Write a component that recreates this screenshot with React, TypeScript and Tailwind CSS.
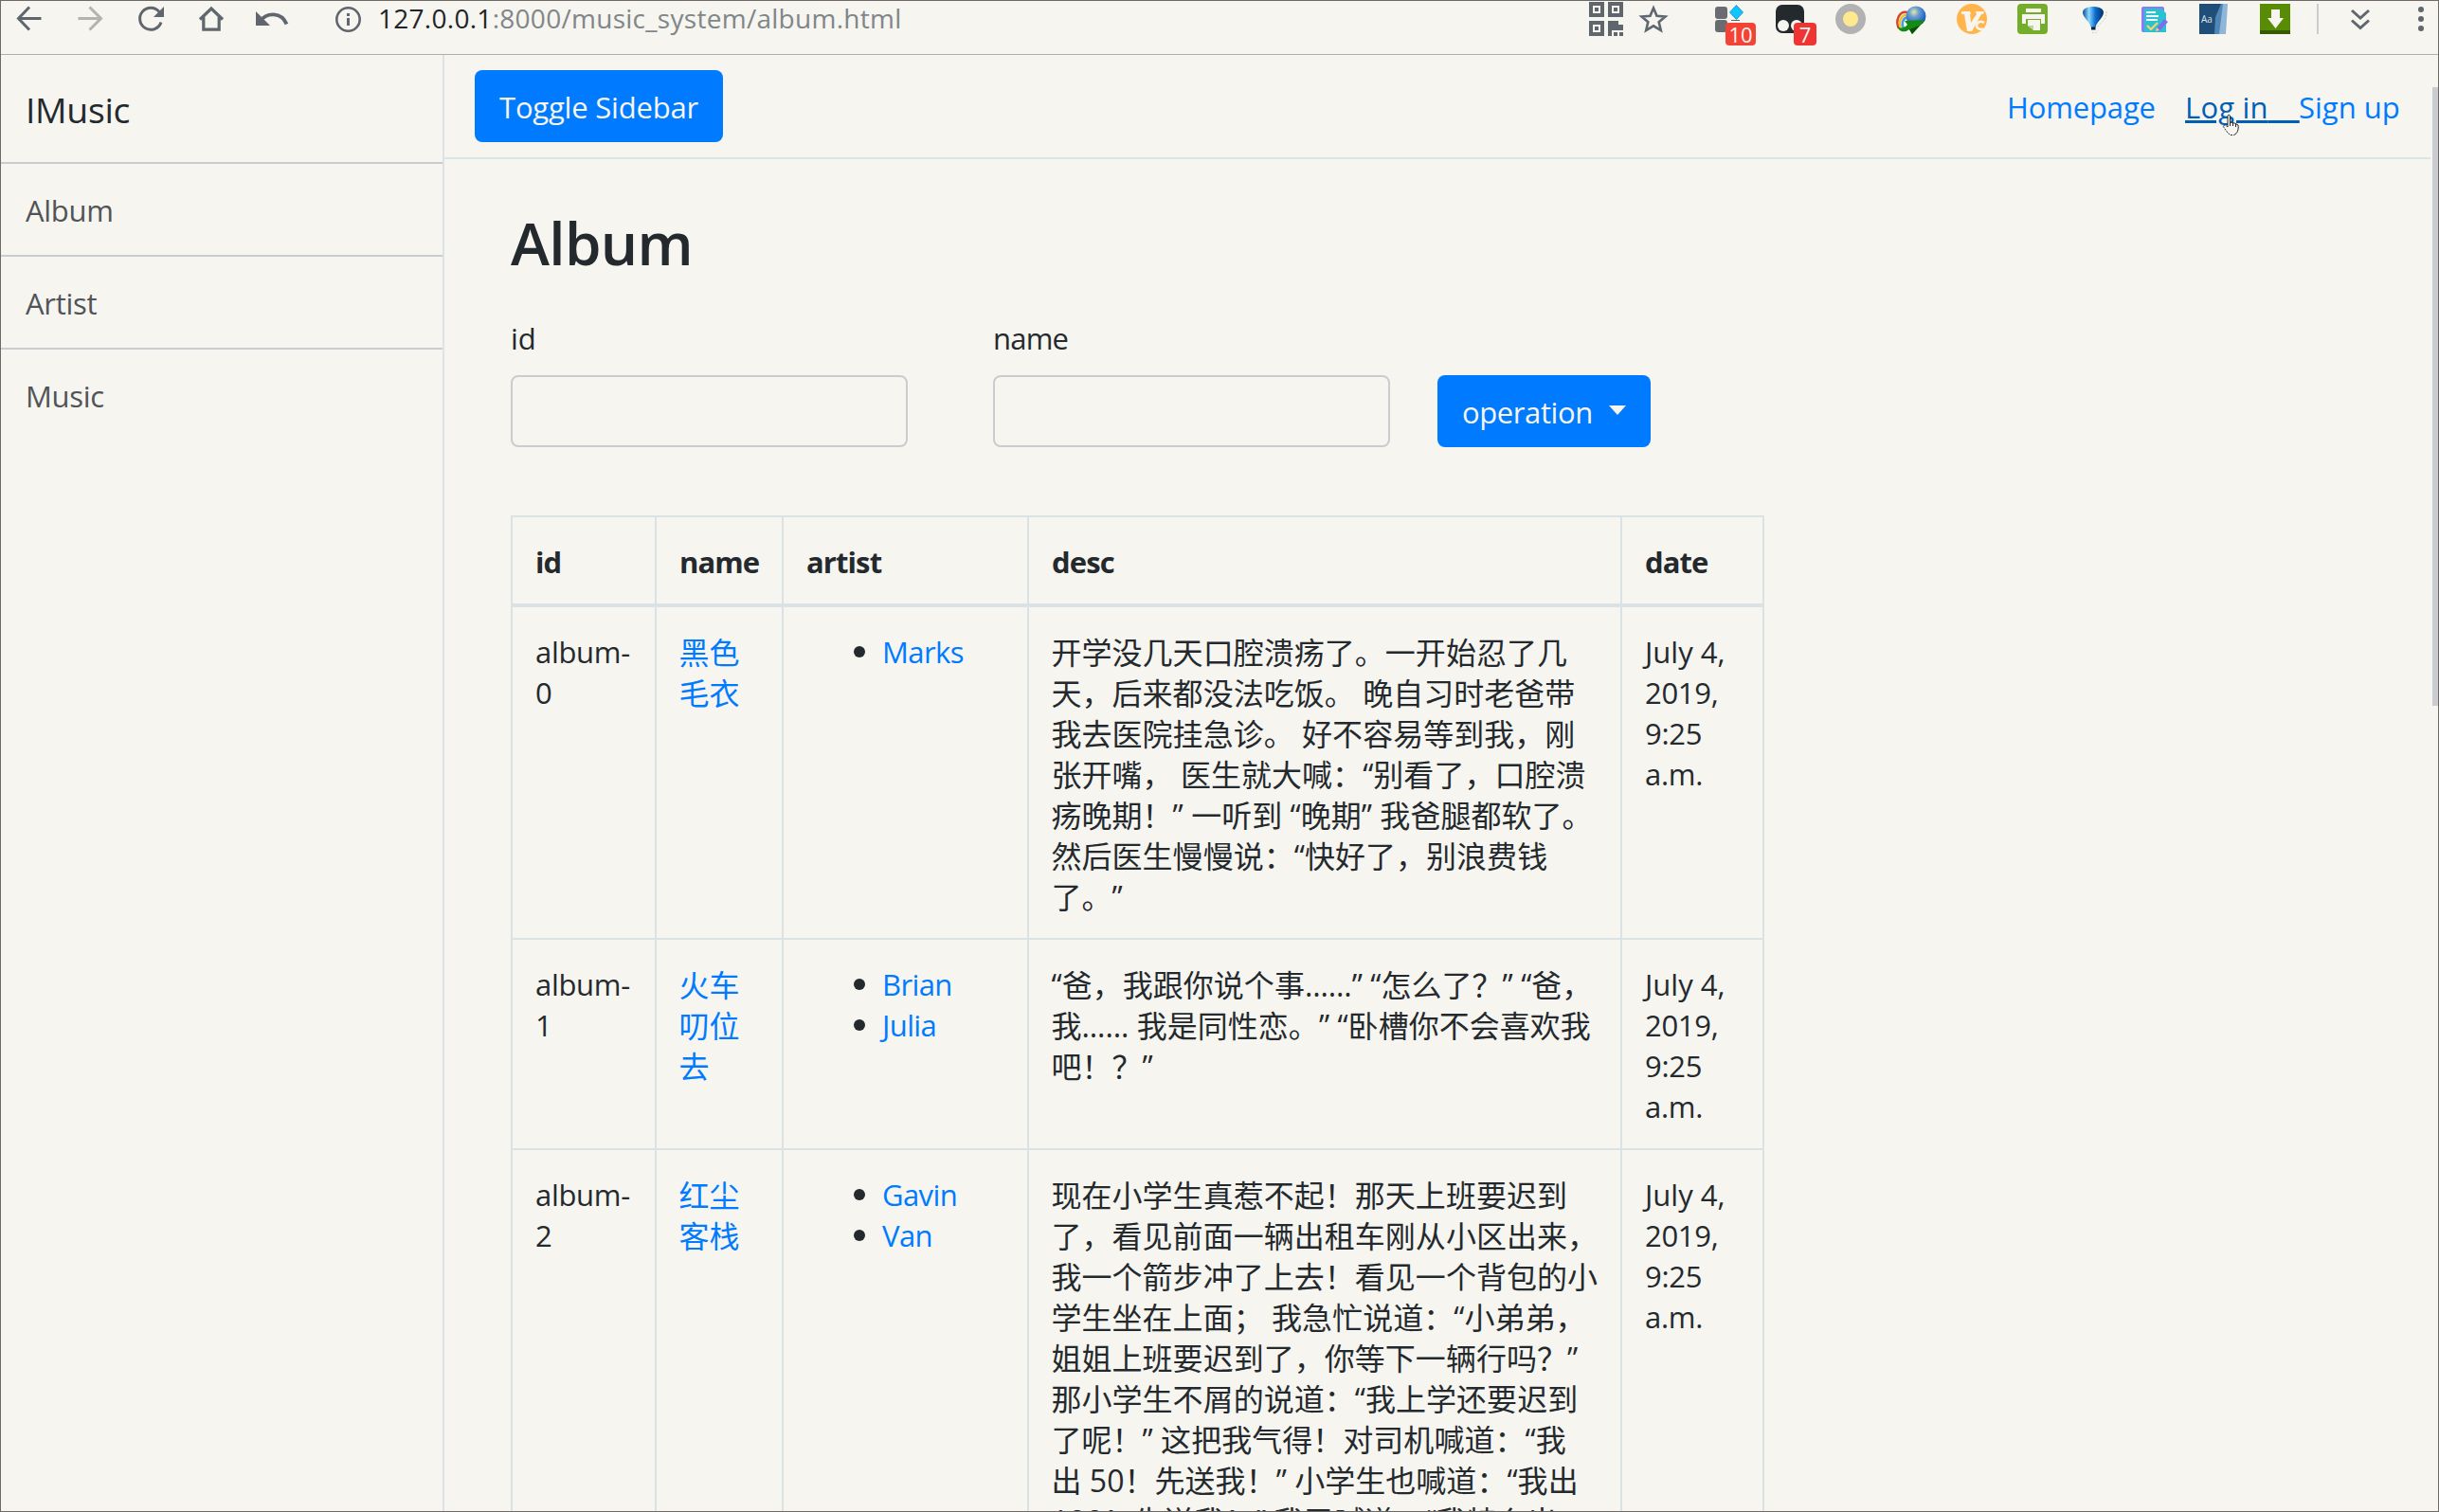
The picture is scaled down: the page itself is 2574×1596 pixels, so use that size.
import React from "react";

const GREY = "#5f666d";

/* One toolbar slot. Drawings share the toolbar's own coordinate space. */
function Slot({ x, w, children, badge }: { x: number; w: number; children: React.ReactNode; badge?: React.ReactNode }) {
  return (
    <div className="relative h-14 shrink-0" style={{ width: w }}>
      <svg width={w} height={56} viewBox={`${x} 1 ${w} 56`} fill="none" className="block">
        {children}
      </svg>
      {badge}
    </div>
  );
}

function Toolbar() {
  return (
    <header className="flex h-[57px] shrink-0 border-b border-[#b0afab]">
      <Slot x={1} w={62}>
        <path d="M31 7.500 19.500 19.500l11.500 12M19.500 19.500h24" stroke={GREY} strokeWidth="3" />
      </Slot>
      <Slot x={63} w={64}>
        <path d="M94.500 7.500 106.500 19.500l-12 12M106.500 19.500h-24" stroke="#b3b3b2" strokeWidth="3" />
      </Slot>
      <Slot x={127} w={64}>
        <path d="M168 12.500A11.500 11.500 0 1 0 170 23.500" stroke={GREY} strokeWidth="3" />
        <path d="M173 7v11h-11z" fill={GREY} />
      </Slot>
      <Slot x={191} w={64}>
        <path d="M211 20.500 223 9l12 11.500M214.800 18v13.200h16.400V18" stroke={GREY} strokeWidth="3.200" />
      </Slot>
      <Slot x={255} w={64}>
        <path d="M270 12v15h15z" fill={GREY} />
        <path d="M275 22c6-9 22-10 27.500 3.500" stroke={GREY} strokeWidth="3.800" />
      </Slot>
      <Slot x={319} w={80}>
        <circle cx="367.500" cy="20.500" r="12.200" stroke={GREY} strokeWidth="2.600" />
        <path d="M366 19h3v8h-3zM366 14h3v3h-3z" fill={GREY} />
      </Slot>
      <div className="h-9 text-[28px] leading-9 tracking-[0.28px] text-[#808689]">
        <span className="text-[#212529]">127.0.0.1</span>:8000/music_system/album.html
      </div>
      <div className="flex-1" />
      <Slot x={1665} w={56}>
        <path
          d="M1679 4h12v12h-12zM1699 4h12v12h-12zM1679 24h12v12h-12z"
          stroke={GREY}
          strokeWidth="4"
        />
        <path
          d="M1683 8h4v4h-4zM1703 8h4v4h-4zM1683 28h4v4h-4zM1697 22h11v4h5v6h-12v6h-4zM1703 34h4v4h-4zM1709 34h4v4h-4z"
          fill={GREY}
        />
      </Slot>
      <Slot x={1721} w={72}>
        <path
          d="M1745 8.500l3.500 8.200 9 .8-6.800 5.800 2.100 8.700-7.800-4.700-7.800 4.700 2.100-8.700-6.800-5.800 9-.8z"
          stroke={GREY}
          strokeWidth="2.600"
        />
      </Slot>
      <Slot
        x={1793}
        w={64}
        badge={
          <span className="absolute left-7 top-[23px] h-6 w-8 rounded bg-[#f44336] text-center text-[22px] leading-[25px] text-[#f6f5ef]">
            10
          </span>
        }
      >
        <rect x="1810" y="7" width="13" height="13" rx="3" fill="#696c70" />
        <rect x="1810" y="21" width="13" height="13" rx="3" fill="#696c70" />
        <path d="M1832.500 5.500l7 7.500-7 7.500-7-7.500z" fill="#0fc4ff" stroke="#1c9fd0" strokeLinejoin="round" />
        <path d="M1827 21.500h9" stroke={GREY} />
      </Slot>
      <Slot
        x={1857}
        w={64}
        badge={
          <span className="absolute left-9 top-[23px] h-6 w-6 rounded bg-[#ef3434] text-center text-[22px] leading-[25px] text-[#f6f5ef]">
            7
          </span>
        }
      >
        <rect x="1874" y="5" width="30" height="30" rx="7" fill="#24292e" />
        <circle cx="1882" cy="27" r="6" fill="#f6f5ef" />
        <circle cx="1896" cy="27" r="6" fill="#f6f5ef" />
      </Slot>
      <Slot x={1921} w={64}>
        <circle cx="1953" cy="20" r="16" fill="#b2b2b2" />
        <circle cx="1953" cy="20" r="8" fill="#ffe98f" />
      </Slot>
      <Slot x={1985} w={64}>
        <defs>
          <radialGradient id="globe" cx="0.400" cy="0.300" r="0.700">
            <stop offset="0" stopColor="#e4e9a8" />
            <stop offset="0.350" stopColor="#6f9fd0" />
            <stop offset="1" stopColor="#0b50c8" />
          </radialGradient>
        </defs>
        <path d="M2013 13c-9-2-13 9-9 17" stroke="#d9442c" strokeWidth="2.500" />
        <path d="M2014 16c-7-2-11 7-8 14" stroke="#efc12e" strokeWidth="2.500" />
        <path d="M2015 19c-6-2-9 5-6 11" stroke="#3aa0e0" strokeWidth="2.500" />
        <circle cx="2022" cy="17" r="10.500" fill="url(#globe)" />
        <path d="M2002 27c3 4 8 3 11-1l-3-4 22-1-14 15-3-5c-5 4-11 3-13-4z" fill="#138a12" />
        <path d="M2015 31l3 5 8-9z" fill="#0a4f0c" />
      </Slot>
      <Slot x={2049} w={64}>
        <circle cx="2081" cy="20" r="16" fill="#ffb44c" />
        <path
          d="M2070 12h9l1 3h-1l1 9 6-9-1-3h9l-1 3h-2l-10 18h-5l-3-18h-3z"
          fill="#f8f5ee"
        />
        <path d="M2094 24c-4-3-8 0-8 3s4 5 7 3" stroke="#f8f5ee" strokeWidth="2.600" />
      </Slot>
      <Slot x={2113} w={64}>
        <rect x="2129" y="4" width="32" height="32" rx="4" fill="#74ac2b" />
        <path d="M2138 9h16v4h-16z" fill="#f6f5ef" />
        <path d="M2134 15h24v10h-4v-5h-16v5h-4z" fill="#f6f5ef" />
        <path d="M2140 21h13v11h-7l-6-5z" fill="#f6f5ef" />
        <path d="M2140 27h6v5z" fill="#bcd795" />
      </Slot>
      <Slot x={2177} w={64}>
        <defs>
          <linearGradient id="balloon" x1="0" x2="1">
            <stop offset="0" stopColor="#0a4f9c" />
            <stop offset="0.300" stopColor="#8fd8ff" />
            <stop offset="0.600" stopColor="#0d6fd0" />
            <stop offset="1" stopColor="#052d66" />
          </linearGradient>
        </defs>
        <path d="M2223 12c1 8-6 12-10 17M2208 34c3 2 6 0 6-2" stroke="#c9c8c4" strokeDasharray="2 1.500" />
        <path d="M2198 13c0-8 22-8 22 0 0 6-7 9-8.500 16h-5c-1-7-8.500-10-8.500-16z" fill="url(#balloon)" />
        <rect x="2207" y="28.500" width="4.500" height="3" fill="#0b1e3c" />
      </Slot>
      <Slot x={2241} w={64}>
        <rect x="2260" y="7" width="24" height="27" rx="2" fill="#8a7cf5" />
        <path d="M2263 9h18l5 5v20h-23z" fill="#29c2cf" />
        <path d="M2265 13h10M2265 17h13M2265 21h12" stroke="#f3fbfb" strokeWidth="2" />
        <path d="M2266 27l4 4 7-7" stroke="#ffcf6b" strokeWidth="2.200" />
        <path d="M2276 30l8-10 4 3-8 9-5 1z" fill="#7d6df0" />
        <path d="M2276 29l3 3-4 1z" fill="#ffcf6b" />
      </Slot>
      <Slot
        x={2305}
        w={64}
        badge={<span className="absolute left-[18px] top-[11px] text-[10px] leading-4 text-[#dce4ea]">Aa</span>}
      >
        <path d="M2321 4h30l-2 32h-28z" fill="#8eb6d8" />
        <path d="M2321 4h25l-4 32h-21z" fill="#4f86b5" />
        <path d="M2321 4h23l-6 14-1 18h-16z" fill="#1f4e79" />
      </Slot>
      <Slot x={2369} w={64}>
        <rect x="2385" y="4" width="32" height="32" fill="#598c05" />
        <rect x="2385" y="32" width="32" height="4" fill="#375900" />
        <path d="M2397 10h9v9h4l-8.500 11-8.500-11h4z" fill="#f6f5ef" />
      </Slot>
      <Slot x={2433} w={140}>
        <path d="M2445 4h2v32h-2z" fill="#caccce" />
        <path d="M2482 11l9 8 9-8M2482 21.500l9 8 9-8" stroke={GREY} strokeWidth="3" />
        <circle cx="2555" cy="10" r="3" fill={GREY} />
        <circle cx="2555" cy="20" r="3" fill={GREY} />
        <circle cx="2555" cy="30" r="3" fill={GREY} />
      </Slot>
    </header>
  );
}

function Cursor() {
  return (
    <svg width="18" height="24" viewBox="0 0 18 24" className="absolute left-[40px] top-[60px]">
      <path
        d="M6 1.500c1.500-1 2.500 0 2.500 1V9l7 2c1.500.5 2 1.500 2 3 0 4-2 8-5 8.500H9C6 21 3 16 1 13c1.500-1 3-1 5 1z"
        fill="#f6f5ef"
      />
      <path d="M6 14c-2-2-3.500-2-5-1 2 3 5 8 8 9.500h3.500" stroke="#24292e" fill="none" strokeDasharray="2 1" />
      <path
        d="M6 14V2c.5-1 2-1 2.500 0v7l3 .5 3 1 2.500 1.500c.8 4-.5 9-4.500 10.500M8.500 9v4M11.500 9.500V13M14.500 10.500V14"
        stroke="#24292e"
        fill="none"
      />
    </svg>
  );
}

const albums = [
  {
    id: ["album-", "0"],
    name: ["黑色", "毛衣"],
    artists: ["Marks"],
    desc: [
      "开学没几天口腔溃疡了。一开始忍了几",
      "天，后来都没法吃饭。 晚自习时老爸带",
      "我去医院挂急诊。 好不容易等到我，刚",
      "张开嘴， 医生就大喊：“别看了，口腔溃",
      "疡晚期！” 一听到 “晚期” 我爸腿都软了。",
      "然后医生慢慢说：“快好了，别浪费钱",
      "了。”",
    ],
    height: "h-[351px]",
  },
  {
    id: ["album-", "1"],
    name: ["火车", "叨位", "去"],
    artists: ["Brian", "Julia"],
    desc: [
      "“爸，我跟你说个事……” “怎么了？” “爸，",
      "我…… 我是同性恋。” “卧槽你不会喜欢我",
      "吧！？”",
    ],
    height: "h-[222px]",
  },
  {
    id: ["album-", "2"],
    name: ["红尘", "客栈"],
    artists: ["Gavin", "Van"],
    desc: [
      "现在小学生真惹不起！那天上班要迟到",
      "了，看见前面一辆出租车刚从小区出来，",
      "我一个箭步冲了上去！看见一个背包的小",
      "学生坐在上面； 我急忙说道：“小弟弟，",
      "姐姐上班要迟到了，你等下一辆行吗？”",
      "那小学生不屑的说道：“我上学还要迟到",
      "了呢！” 这把我气得！对司机喊道：“我",
      "出 50！先送我！” 小学生也喊道：“我出",
      "100！先送我！” 我又喊道：“我特么出",
    ],
    height: "h-[480px]",
  },
];

function Lines({ items }: { items: string[] }) {
  return (
    <>
      {items.map((t) => (
        <div key={t} className="whitespace-nowrap">
          {t}
        </div>
      ))}
    </>
  );
}

const cell = "border-r-2 border-b-2 border-[#dbe2e6] pl-6 pt-[26px] align-top";
const cjkCell = "border-r-2 border-b-2 border-[#dbe2e6] pl-[23.5px] pt-[26px] align-top text-[32px] tracking-[0.03px]";
const head = "border-r-2 border-b-4 border-[#dbe2e6] pl-6 pt-[3px] text-left align-middle font-bold";

function AlbumTable() {
  return (
    <table className="mt-[72px] w-[1323px] table-fixed border-separate border-spacing-0 border-l-2 border-t-2 border-[#dbe2e6] text-[31px] leading-[43px] tracking-[-0.3px]">
      <colgroup>
        <col className="w-[152px]" />
        <col className="w-[134px]" />
        <col className="w-[259px]" />
        <col className="w-[626px]" />
        <col className="w-[150px]" />
      </colgroup>
      <thead>
        <tr className="h-[95px] tracking-[-0.9px]">
          <th className={head}>id</th>
          <th className={head}>name</th>
          <th className={head}>artist</th>
          <th className={head}>desc</th>
          <th className={head}>date</th>
        </tr>
      </thead>
      <tbody>
        {albums.map((a) => (
          <tr key={a.id[1]} className={a.height}>
            <td className={cell}>
              <Lines items={a.id} />
            </td>
            <td className={`${cjkCell} text-[#007bff]`}>
              <Lines items={a.name} />
            </td>
            <td className={cell}>
              <ul>
                {a.artists.map((n) => (
                  <li key={n} className="flex items-center">
                    <span className="mb-px ml-[50px] mr-[18px] size-3 rounded-full bg-[#24292e]" />
                    <a className="tracking-[-0.6px] text-[#007bff]">{n}</a>
                  </li>
                ))}
              </ul>
            </td>
            <td className={cjkCell}>
              <Lines items={a.desc} />
            </td>
            <td className={cell}>
              <div className="tracking-normal">July 4,</div>
              <Lines items={["2019,", "9:25", "a.m."]} />
            </td>
          </tr>
        ))}
      </tbody>
    </table>
  );
}

export default function App() {
  return (
    <div className="flex h-[1596px] w-[2574px] flex-col overflow-hidden border border-[#6e6866] bg-[#f6f5ef] font-['Open_Sans','Noto_Sans_CJK_SC',sans-serif] text-[#24292e] [text-spacing-trim:space-all]">
      <Toolbar />
      <div className="flex min-h-0 flex-1">
        <aside className="w-[468px] shrink-0 border-r-2 border-[#dce2e7] text-[31px] tracking-[-0.3px] text-[#505458]">
          <div className="flex h-[115px] items-center border-b-2 border-[#c9ccd0] pl-[26px] pt-0.5 text-[37.3px] text-[#24292e]">
            IMusic
          </div>
          <div className="flex h-[98px] items-center border-b-2 border-[#c9ccd0] pl-[26px] pt-0.5">Album</div>
          <div className="flex h-[98px] items-center border-b-2 border-[#c9ccd0] pl-[26px] pt-0.5">Artist</div>
          <div className="flex h-[96px] items-center pl-[26px] pt-0.5">Music</div>
        </aside>

        <main className="w-[2096px] shrink-0 text-[31px]">
          <nav className="flex h-[110px] items-center justify-between border-b-2 border-[#dae3e6] pl-8">
            <button className="h-[76px] w-[262px] rounded-lg bg-[#007bff] pt-0.5 tracking-[-0.2px] text-[#f6f5ef]">
              Toggle Sidebar
            </button>
            <div className="flex h-full items-center pt-0.5 text-[#007bff]">
              <a className="w-[187px] tracking-[-0.15px]">Homepage</a>
              <div className="relative flex h-full w-[120px] items-center pl-px">
                <a className="whitespace-nowrap text-[#005eb5] underline decoration-[3px] underline-offset-2 tracking-[0.2px]">
                  Log in{"\u00a0\u00a0\u00a0\u00a0"}
                </a>
                <Cursor />
              </div>
              <a className="w-[140px] pl-px">Sign up</a>
            </div>
          </nav>

          <div className="pl-[70px]">
            <h1 className="mt-[50px] h-[76px] text-[62px] font-semibold leading-[76px] tracking-[-0.7px]">Album</h1>
            <form className="mt-[39px] flex items-end">
              <label className="block w-[419px] leading-[48px]">
                id
                <input className="mt-[15px] block h-[76px] w-full rounded-lg border-2 border-[#caccd1]" />
              </label>
              <label className="ml-[90px] block w-[419px] leading-[48px] tracking-[-0.8px]">
                name
                <input className="mt-[15px] block h-[76px] w-full rounded-lg border-2 border-[#caccd1]" />
              </label>
              <button
                type="button"
                className="ml-[50px] flex h-[76px] w-[225px] items-center rounded-lg bg-[#007bff] pl-[26px] pt-0.5 tracking-[-0.4px] text-[#f6f5ef]"
              >
                operation
                <span className="mb-1 ml-[17px] border-x-[9.5px] border-t-[10px] border-x-transparent border-t-[#f6f5ef]" />
              </button>
            </form>
            <AlbumTable />
          </div>
        </main>

        <div className="ml-0.5 mt-[34px] h-[653px] w-1.5 bg-[#caccd1]" />
      </div>
    </div>
  );
}
